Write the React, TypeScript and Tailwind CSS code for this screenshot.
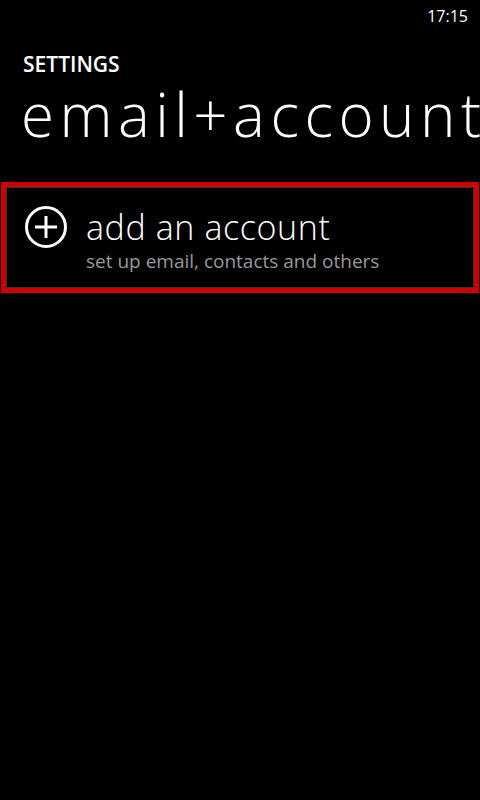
import React from "react";

export default function App() {
  return (
    <div className="w-[480px] h-[800px] bg-black text-white overflow-hidden flex flex-col" style={{ fontFamily: '"Open Sans", "Noto Sans", sans-serif' }}>
      <div className="h-[32px] flex justify-end items-start pr-[12px] pt-[4px] text-[16px] leading-[24px]">17:15</div>
      <div className="pl-[23px] mt-[19px] text-[21px] leading-[26px] font-semibold">SETTINGS</div>
      <div className="pl-[21px] text-[60px] leading-[74px] font-light whitespace-nowrap tracking-[5.5px]">email+account</div>
      <div className="mt-[31px] ml-[1px] mr-[1px] h-[111px] border-[5px] border-[#d00000] flex items-start">
        <div className="flex-1 h-full border border-[#2e3a2e] flex items-start pl-[17px] pt-[17px]">
          <svg width="44" height="44" viewBox="0 0 44 44">
            <circle cx="22" cy="22" r="19.5" fill="none" stroke="white" strokeWidth="3" />
            <line x1="22" y1="11" x2="22" y2="33" stroke="white" strokeWidth="3" />
            <line x1="11" y1="22" x2="33" y2="22" stroke="white" strokeWidth="3" />
          </svg>
          <div className="ml-[18px] flex flex-col">
            <div className="text-[34px] leading-[40px] font-light mt-[2px] tracking-[0.6px]">add an account</div>
            <div className="text-[19px] leading-[24px] text-[#9a9a9a] mt-[2px]">set up email, contacts and others</div>
          </div>
        </div>
      </div>
    </div>
  );
}
